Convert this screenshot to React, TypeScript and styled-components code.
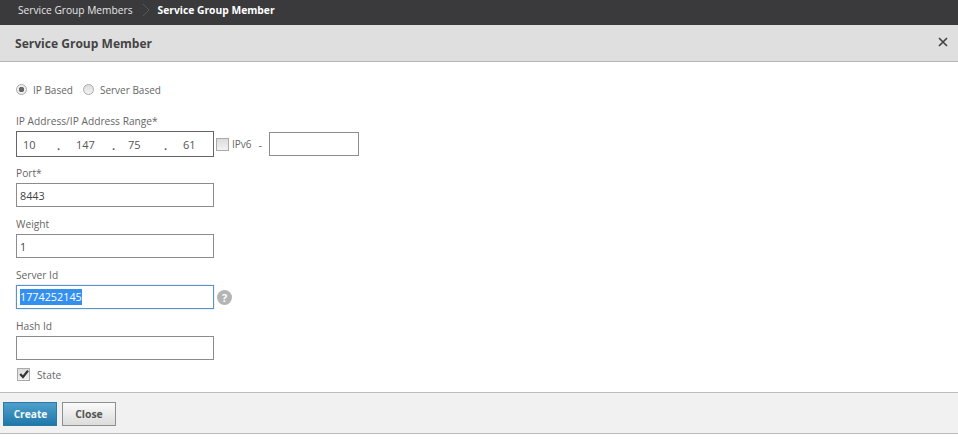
import React from "react";
import styled, { createGlobalStyle } from "styled-components";

const Global = createGlobalStyle`
  html, body { margin: 0; padding: 0; background: #fff; }
  body { font-family: "Open Sans", "Liberation Sans", sans-serif; color: #555; }
`;
const Page = styled.div`
  width: 958px; height: 448px; display: flex; flex-direction: column; overflow: hidden; background: #fff;
`;
const Crumbs = styled.nav`
  height: 25px; box-sizing: border-box; background: #3a3a3c; display: flex; align-items: center;
  padding: 0 0 5px 18px; font-size: 10.2px; color: #e6e6e6;
`;
const CrumbSep = styled.svg`
  width: 8px; height: 14px; margin: 0 8px 0 9px;
`;
const CrumbActive = styled.span`
  color: #fff; font-weight: 700; font-size: 10.3px;
`;
const Header = styled.header`
  height: 37px; box-sizing: border-box; background: #dfdfdf; border-bottom: 1px solid #b5b5b5;
  display: flex; align-items: center; justify-content: space-between; padding: 0 10px 0 15px;
`;
const Title = styled.h1`
  margin: 0; font-size: 12.05px; font-weight: 700; color: #444;
`;
const CloseX = styled.svg`
  width: 10px; height: 10px; margin-top: -3px;
`;
const Body = styled.main`
  flex: 1; padding: 20px 0 0 16px; display: flex; flex-direction: column;
`;
const RadioRow = styled.div`
  display: flex; align-items: center; height: 16px; margin-bottom: 15px; font-size: 10px; color: #666;
`;
const Radio = styled.span<{ $on?: boolean }>`
  width: 9px; height: 9px; border-radius: 50%; border: 1px solid #aaa; margin: -2px 6px 0 0;
  background: ${(p) => (p.$on ? "radial-gradient(circle, #666 0 2.5px, #eee 3px)" : "linear-gradient(#ddd, #f4f4f4)")};
`;
const RadioText = styled.span`
  margin-right: 10px;
`;
const Label = styled.label`
  display: block; height: 18px; line-height: 17px; font-size: 10.2px; color: #666;
`;
const Row = styled.div`
  display: flex; align-items: center;
`;
const Field = styled.div<{ $height?: number }>`
  height: ${(p) => p.$height ?? 51}px; flex: none;
`;
const TextBox = styled.div<{ $focus?: boolean }>`
  width: 198px; height: 24px; box-sizing: border-box; display: flex; align-items: center; padding-left: 3px;
  font-size: 10.8px; color: #444; background: #fff;
  border: 1px solid ${(p) => (p.$focus ? "#5b92c9" : "#8c8c8c")};
  box-shadow: ${(p) => (p.$focus ? "0 0 1px #7fb0e0" : "none")};
`;
const Selected = styled.span`
  background: #3390ee; color: #fff; line-height: 16px;
`;
const IpBox = styled.div`
  width: 198px; height: 26px; box-sizing: border-box; border: 1px solid #666; background: #fff;
  display: grid; grid-template-columns: 34px 19px 36px 16px 36px 19px 1fr; align-items: center;
  font-size: 11px; color: #555; padding-left: 6px;
`;
const Dot = styled.span`
  padding-top: 3px; font-weight: 700;
`;
const Check = styled.span<{ $gapLeft?: number }>`
  width: 11px; height: 11px; border: 1px solid #aaa; background: linear-gradient(#dcdcdc, #f2f2f2);
  display: inline-flex; align-items: center; justify-content: center; flex: none;
  margin-left: ${(p) => p.$gapLeft ?? 0}px;
`;
const Ipv6 = styled.span`
  font-size: 10px; color: #666; margin-left: 3px;
`;
const Dash = styled.span`
  font-size: 11px; color: #666; margin: 0 7px 0 7px;
`;
const SmallBox = styled.div`
  width: 90px; height: 24px; box-sizing: border-box; border: 1px solid #8c8c8c;
`;
const Help = styled.span`
  width: 15px; height: 15px; border-radius: 50%; background: #b4b4b4; color: #fff; font-size: 11px; font-weight: 700;
  display: flex; align-items: center; justify-content: center; margin-left: 3px;
`;
const StateRow = styled.div`
  display: flex; align-items: center; font-size: 10.2px; color: #666; margin: -2px 0 0 1px; height: 16px;
`;
const StateLabel = styled.span`
  margin-left: 7px; padding-top: 1px;
`;
const Footer = styled.footer`
  height: 42px; box-sizing: border-box; background: #f1f1f1; border-top: 1px solid #bcbcbc; border-bottom: 1px solid #bcbcbc;
  display: flex; align-items: center; gap: 5px; padding: 1px 0 0 3px; margin-bottom: 14px; flex: none;
`;
const Primary = styled.button`
  width: 54px; height: 24px; padding: 0 0 0 1px; border: 1px solid #2a79a6; background: linear-gradient(#4f9fcb, #1f78aa);
  color: #f2f7fa; font: 700 10.2px "Open Sans", sans-serif;
`;
const Secondary = styled.button`
  width: 54px; height: 24px; padding: 0; border: 1px solid #8e8e8e; background: linear-gradient(#fafafa, #dcdcdc);
  color: #555; font: 700 10.4px "Open Sans", sans-serif;
`;

const CheckMark = () => (
  <svg width="10" height="10" viewBox="0 0 10 10">
    <path d="M1.2 5 L4 8 L9 1.6" fill="none" stroke="#333" strokeWidth="2.3" />
  </svg>
);

export default function App() {
  return (
    <Page>
      <Global />
      <Crumbs>
        <span>Service Group Members</span>
        <CrumbSep viewBox="0 0 8 14">
          <path d="M1 1 L7 7 L1 13" fill="none" stroke="#565658" strokeWidth="1" />
        </CrumbSep>
        <CrumbActive>Service Group Member</CrumbActive>
      </Crumbs>
      <Header>
        <Title>Service Group Member</Title>
        <CloseX viewBox="0 0 10 10">
          <path d="M1 1 L9 9 M9 1 L1 9" stroke="#444" strokeWidth="1.7" />
        </CloseX>
      </Header>
      <Body>
        <RadioRow>
          <Radio $on />
          <RadioText>IP Based</RadioText>
          <Radio />
          <RadioText>Server Based</RadioText>
        </RadioRow>
        <Field $height={52}>
          <Label>IP Address/IP Address Range*</Label>
          <Row>
            <IpBox>
              <span>10</span>
              <Dot>.</Dot>
              <span>147</span>
              <Dot>.</Dot>
              <span>75</span>
              <Dot>.</Dot>
              <span>61</span>
            </IpBox>
            <Check $gapLeft={2} />
            <Ipv6>IPv6</Ipv6>
            <Dash>-</Dash>
            <SmallBox />
          </Row>
        </Field>
        <Field>
          <Label>Port*</Label>
          <TextBox>8443</TextBox>
        </Field>
        <Field>
          <Label>Weight</Label>
          <TextBox>1</TextBox>
        </Field>
        <Field>
          <Label>Server Id</Label>
          <Row>
            <TextBox $focus>
              <Selected>1774252145</Selected>
            </TextBox>
            <Help>?</Help>
          </Row>
        </Field>
        <Field $height={50}>
          <Label>Hash Id</Label>
          <TextBox />
        </Field>
        <StateRow>
          <Check>
            <CheckMark />
          </Check>
          <StateLabel>State</StateLabel>
        </StateRow>
      </Body>
      <Footer>
        <Primary>Create</Primary>
        <Secondary>Close</Secondary>
      </Footer>
    </Page>
  );
}
